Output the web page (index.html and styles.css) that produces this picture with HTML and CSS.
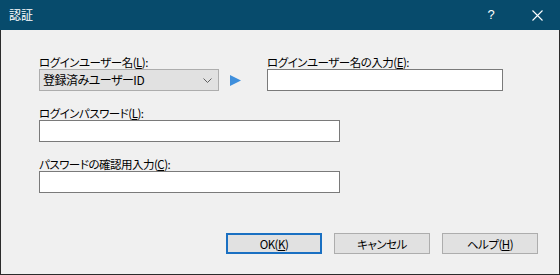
FILE: index.html
```html
<!DOCTYPE html>
<html lang="ja">
<head>
<meta charset="utf-8">
<title>認証</title>
<link rel="stylesheet" href="styles.css">
</head>
<body>
<div class="window">
  <div class="titlebar">
    <span class="title">認証</span>
    <div class="caption-buttons">
      <span class="cap-btn help">?</span>
      <span class="cap-btn close">
        <svg width="11" height="11" viewBox="0 0 11 11"><path d="M0.5 0.5 L10.5 10.5 M10.5 0.5 L0.5 10.5" stroke="#fff" stroke-width="1.1" fill="none"/></svg>
      </span>
    </div>
  </div>
  <div class="client">
    <div class="form">
      <div class="row-top">
        <div class="field combo-field">
          <label class="lbl">ログインユーザー名(<u>L</u>):</label>
          <div class="combo">
            <span class="combo-text">登録済みユーザーID</span>
            <svg class="chev" width="9" height="5" viewBox="0 0 9 5"><path d="M0.5 0.5 L4.5 4.5 L8.5 0.5" stroke="#606060" stroke-width="1" fill="none"/></svg>
          </div>
        </div>
        <div class="arrow-cell">
          <svg width="11" height="11" viewBox="0 0 11 11"><path d="M0 0 L11 5.5 L0 11 Z" fill="#3f8fdc"/></svg>
        </div>
        <div class="field user-field">
          <label class="lbl">ログインユーザー名の入力(<u>E</u>):</label>
          <div class="textbox"></div>
        </div>
      </div>
      <div class="field wide">
        <label class="lbl">ログインパスワード(<u>L</u>):</label>
        <div class="textbox"></div>
      </div>
      <div class="field wide">
        <label class="lbl">パスワードの確認用入力(<u>C</u>):</label>
        <div class="textbox"></div>
      </div>
    </div>
    <div class="buttons">
      <button class="btn default">OK(<u>K</u>)</button>
      <button class="btn">キャンセル</button>
      <button class="btn">ヘルプ(<u>H</u>)</button>
    </div>
  </div>
</div>
</body>
</html>
```
FILE: styles.css
```css
html, body {
  margin: 0;
  padding: 0;
  background: #f0f0f0;
}
body {
  font-family: "Noto Sans CJK JP", "Noto Sans", sans-serif;
  font-size: 11.5px;
  letter-spacing: -0.5px;
  color: #000;
  font-feature-settings: "palt";
}
.window {
  width: 560px;
  height: 275px;
  display: flex;
  flex-direction: column;
  box-sizing: border-box;
}
.titlebar {
  height: 30px;
  flex: none;
  background: #074b6c;
  color: #fff;
  display: flex;
  align-items: center;
  justify-content: space-between;
}
.title {
  padding-left: 9px;
  font-size: 12px;
  letter-spacing: 0;
  line-height: 14px;
  padding-bottom: 1px;
}
.caption-buttons {
  display: flex;
  height: 30px;
}
.cap-btn {
  width: 46px;
  height: 30px;
  display: flex;
  align-items: center;
  justify-content: center;
}
.help {
  font-family: "Liberation Sans", sans-serif;
  font-size: 13px;
  letter-spacing: 0;
  padding-bottom: 1px;
  box-sizing: border-box;
}
.client {
  flex: 1;
  display: flex;
  flex-direction: column;
  border: 1px solid #2b2b2b;
  border-top: none;
  background: #f0f0f0;
}
.form {
  padding: 25px 0 0 38px;
  display: flex;
  flex-direction: column;
  gap: 15px;
}
.row-top {
  display: flex;
  align-items: flex-end;
}
.field {
  display: flex;
  flex-direction: column;
}
.lbl {
  height: 14px;
  line-height: 14px;
  white-space: nowrap;
}
u {
  text-decoration: underline;
  text-underline-offset: 1px;
}
.combo-field {
  width: 180px;
}
.combo {
  height: 22px;
  box-sizing: border-box;
  border: 1px solid #adadad;
  background: #e1e1e1;
  display: flex;
  align-items: center;
  justify-content: space-between;
  padding: 0 6px 0 3px;
}
.combo-text {
  line-height: 14px;
  font-size: 12px;
}
.chev {
  display: block;
}
.arrow-cell {
  width: 48px;
  height: 22px;
  display: flex;
  align-items: center;
  padding-left: 11px;
  box-sizing: border-box;
}
.arrow-cell svg {
  display: block;
}
.user-field {
  width: 236px;
}
.textbox {
  height: 22px;
  box-sizing: border-box;
  border: 1px solid #7a7a7a;
  background: #fff;
}
.wide {
  width: 301px;
}
.buttons {
  margin-top: auto;
  display: flex;
  justify-content: flex-end;
  gap: 12px;
  padding: 0 21px 20px 0;
}
.btn {
  width: 96px;
  height: 21px;
  box-sizing: border-box;
  border: 1px solid #adadad;
  background: #e1e1e1;
  font-family: inherit;
  font-size: 11.5px;
  letter-spacing: -0.5px;
  font-feature-settings: "palt";
  color: #000;
  padding: 0;
  line-height: 14px;
  margin: 0;
}
.btn.default {
  border: 2px solid #1a70c2;
}
```
